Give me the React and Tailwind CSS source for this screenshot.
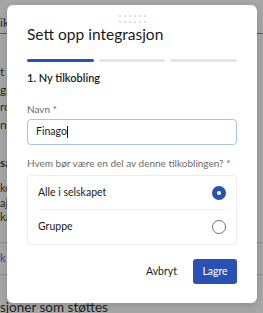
export default function App() {
  const dots = [0, 1, 2, 3, 4, 5];

  return (
    <div className="relative h-[313px] w-[263px] overflow-hidden bg-[#a6a6a6] font-['Lato',sans-serif] text-[#1b1b1b]">
      {/* dimmed page behind the dialog, only its left edge shows */}
      <div className="flex flex-col whitespace-nowrap text-[12px] text-[#2b2b2b]">
        <div className="h-[34px] border-b border-[#5a5a5a] pt-[16px] leading-[14px]">ik</div>
        <div className="mt-[29px] leading-[17.5px]">
          <p>t</p>
          <p>go</p>
          <p>rc</p>
          <p>ni</p>
        </div>
        <div className="mt-[22px] font-bold leading-[16px]">sa</div>
        <div className="mt-[10px] text-[11px] leading-[14.5px]">
          <p>kc</p>
          <p>aj</p>
          <p>ka</p>
        </div>
        <div className="mt-[17px] flex h-[33px] items-center border-y border-[#8c8c8c] text-[11px] text-[#2b4a92]">k</div>
        <div className="mt-[24px] text-[13.5px] leading-[16px] text-[#1e1e1e]">sjoner som støttes</div>
      </div>

      {/* dialog */}
      <div className="absolute left-[7px] top-[5px] flex w-[250px] flex-col rounded-[6px] bg-white px-[20px] pb-[19px] shadow-[0_2px_8px_rgba(0,0,0,0.15)]">
        <div className="flex flex-col items-center gap-[4px] pt-[10px]">
          <div className="flex gap-[3px]">
            {dots.map((i) => (
              <span key={i} className="h-[2px] w-[2px] rounded-full bg-[#d6d6d6]" />
            ))}
          </div>
          <div className="flex gap-[3px]">
            {dots.map((i) => (
              <span key={i} className="h-[2px] w-[2px] rounded-full bg-[#d6d6d6]" />
            ))}
          </div>
        </div>

        <h2 className="mt-[1px] text-[15.5px] leading-[20px] text-[#1b1b1b]">Sett opp integrasjon</h2>

        <div className="mt-[15px] flex gap-[5px]">
          <div className="h-[3px] flex-1 rounded-full bg-[#2851b3]" />
          <div className="h-[3px] flex-1 rounded-full bg-[#e6e6e6]" />
          <div className="h-[3px] flex-1 rounded-full bg-[#e6e6e6]" />
        </div>

        <div className="mt-[9px] text-[11px] font-semibold leading-[14px]">1. Ny tilkobling</div>

        <label className="mt-[18px] text-[10px] leading-[13px] text-[#6b6b6b]">
          Navn <span className="text-[#cc2a3e]">*</span>
        </label>
        <div className="mt-[3px] flex h-[26px] items-center rounded-[4px] border border-[#aac2f2] px-[8px] text-[10.5px]">
          Finago<span className="h-[12px] w-px bg-[#111]" />
        </div>

        <label className="mt-[12px] whitespace-nowrap text-[10px] leading-[13px] text-[#6b6b6b]">
          Hvem bør være en del av denne tilkoblingen? <span className="text-[#cc2a3e]">*</span>
        </label>

        <div className="mt-[5px] flex flex-col rounded-[4px] border border-[#ededed] px-[10px]">
          <div className="flex h-[34px] items-center justify-between border-b border-[#f0f0f0]">
            <span className="text-[10.5px]">Alle i selskapet</span>
            <span className="flex h-[14px] w-[14px] items-center justify-center rounded-full bg-[#2851b3]">
              <span className="h-[4px] w-[4px] rounded-full bg-white" />
            </span>
          </div>
          <div className="flex h-[34px] items-center justify-between">
            <span className="text-[10.5px]">Gruppe</span>
            <span className="h-[14px] w-[14px] rounded-full border-[1.5px] border-[#707070]" />
          </div>
        </div>

        <div className="mt-[14px] flex items-center justify-end gap-[16px]">
          <button className="text-[10.5px] text-[#1b1b1b]">Avbryt</button>
          <button className="h-[25px] w-[44px] rounded-[3px] bg-[#2851b3] text-[10.5px] text-white">Lagre</button>
        </div>
      </div>
    </div>
  );
}
